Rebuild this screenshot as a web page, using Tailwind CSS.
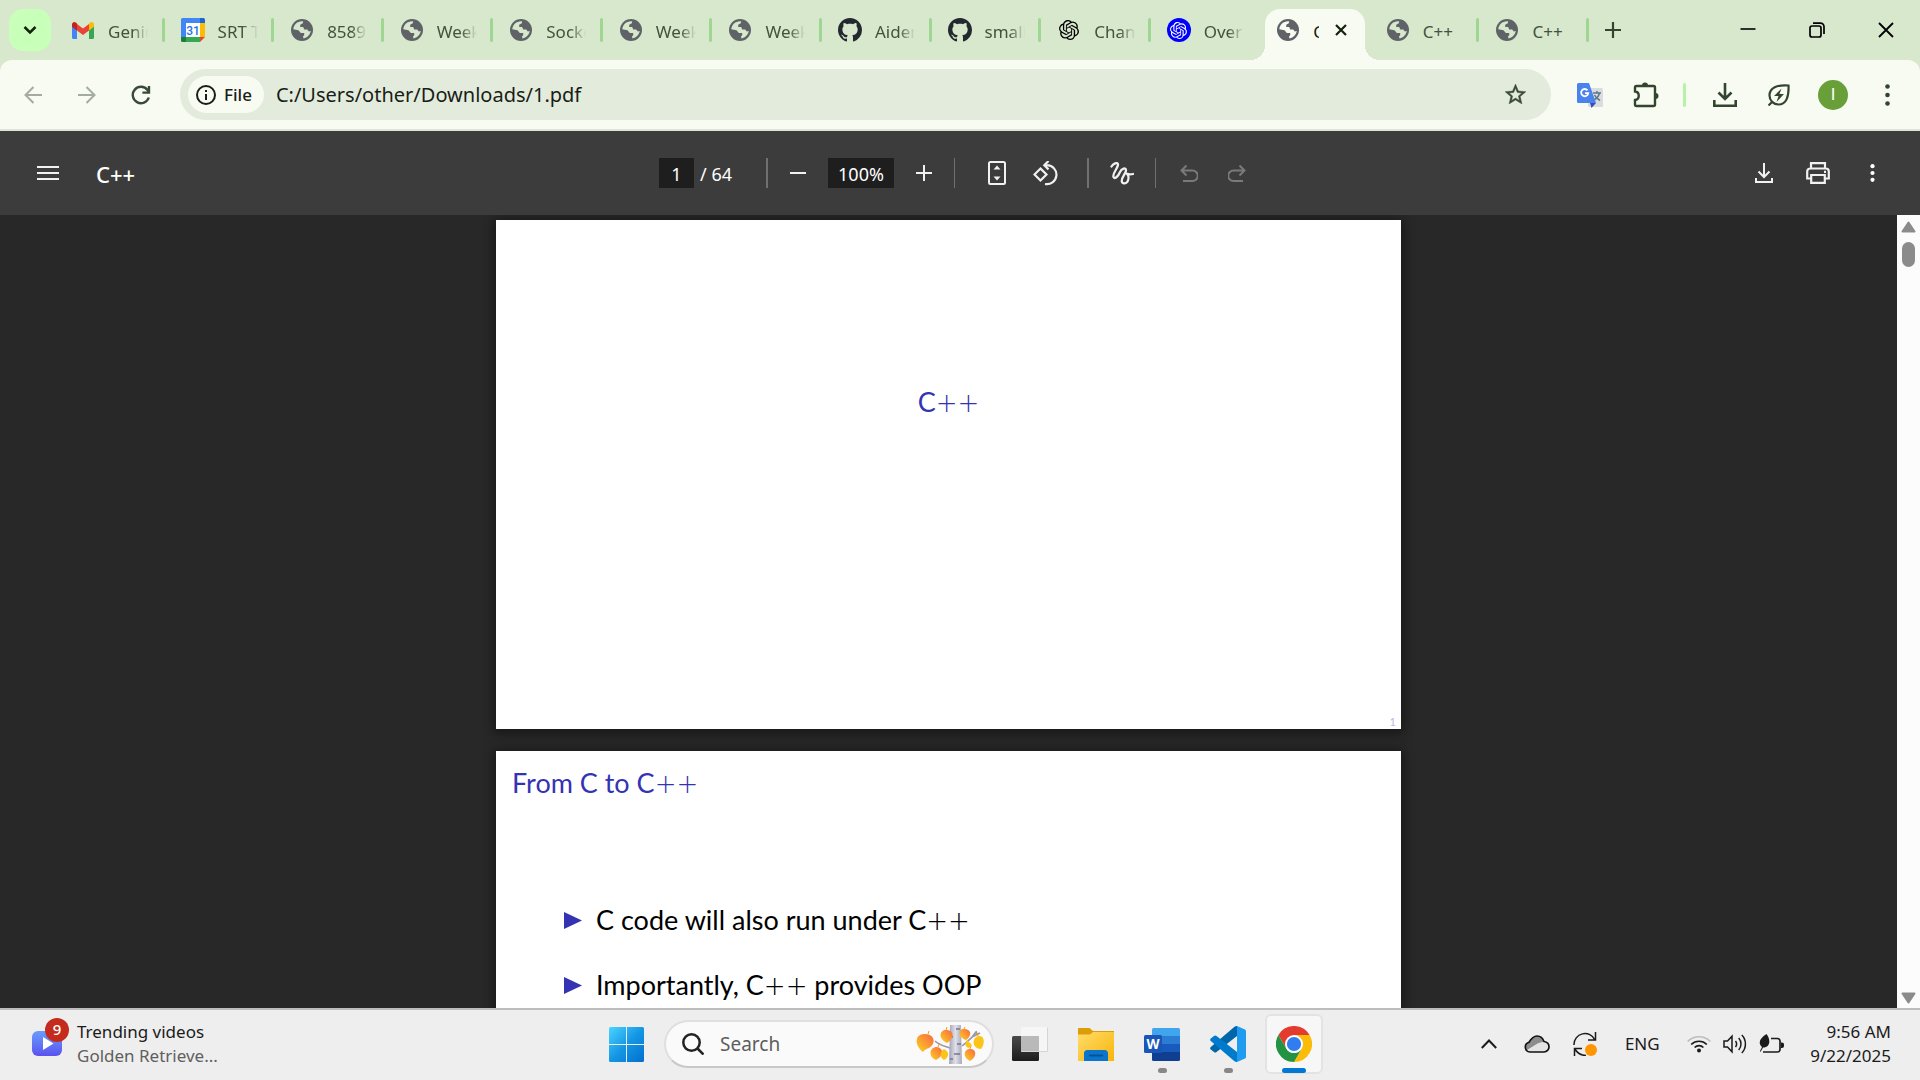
<!DOCTYPE html>
<html lang="en">
<head>
<meta charset="utf-8">
<title>C++</title>
<script src="https://cdn.jsdelivr.net/npm/@tailwindcss/browser@4"></script>
</head>
<body class="flex h-screen flex-col overflow-hidden bg-[#282828] font-['Noto_Sans','Open_Sans',sans-serif]">

<svg class="hidden" aria-hidden="true">
  <symbol id="globe" viewBox="0 0 22 22">
    <circle cx="11" cy="11" r="11" fill="#5f6368"/>
    <path d="M2.300 10.200C2.600 5.800 6.400 2.200 11 2.200l1.200.2-.4 1.800-2.600 1.600v2.200h3l1 2.400h3l1.600 2 2-.3c-.6 3.600-3.500 6.800-7.300 7.500l-.5-2.100 1.200-1.300v-2.200H9.800L7.500 11.200z" fill="currentColor"/>
  </symbol>
  <symbol id="github" viewBox="0 0 16 16"><path fill="#24292f" d="M8 0C3.580 0 0 3.580 0 8c0 3.540 2.290 6.530 5.470 7.590.4.070.55-.17.55-.38 0-.19-.01-.82-.01-1.490-2.010.37-2.530-.49-2.690-.94-.09-.23-.48-.94-.82-1.130-.28-.15-.68-.52-.01-.53.63-.01 1.080.58 1.230.82.72 1.210 1.870.87 2.330.66.07-.52.28-.87.51-1.070-1.780-.2-3.640-.89-3.640-3.950 0-.87.31-1.590.82-2.150-.08-.2-.36-1.020.08-2.120 0 0 .67-.21 2.200.82.64-.18 1.320-.27 2-.27s1.360.09 2 .27c1.530-1.040 2.200-.82 2.200-.82.44 1.100.16 1.920.08 2.120.51.56.82 1.270.82 2.150 0 3.070-1.870 3.750-3.650 3.950.29.25.54.73.54 1.480 0 1.070-.01 1.930-.01 2.200 0 .21.15.46.55.38A8.010 8.010 0 0 0 16 8c0-4.420-3.580-8-8-8z"/></symbol>
  <symbol id="openai" viewBox="0 0 24 24"><path fill="currentColor" d="M22.2819 9.8211a5.9847 5.9847 0 0 0-.5157-4.9108 6.0462 6.0462 0 0 0-6.5098-2.9A6.0651 6.0651 0 0 0 4.9807 4.1818a5.9847 5.9847 0 0 0-3.9977 2.9 6.0462 6.0462 0 0 0 .7427 7.0966 5.98 5.98 0 0 0 .511 4.9107 6.051 6.051 0 0 0 6.5146 2.9001A5.9847 5.9847 0 0 0 13.2599 24a6.0557 6.0557 0 0 0 5.7718-4.2058 5.9894 5.9894 0 0 0 3.9977-2.9001 6.0557 6.0557 0 0 0-.7475-7.0729zm-9.022 12.6081a4.4755 4.4755 0 0 1-2.8764-1.0408l.1419-.0804 4.7783-2.7582a.7948.7948 0 0 0 .3927-.6813v-6.7369l2.02 1.1686a.071.071 0 0 1 .038.052v5.5826a4.504 4.504 0 0 1-4.4945 4.4944zm-9.6607-4.1254a4.4708 4.4708 0 0 1-.5346-3.0137l.142.0852 4.783 2.7582a.7712.7712 0 0 0 .7806 0l5.8428-3.3685v2.3324a.0804.0804 0 0 1-.0332.0615L9.74 19.9502a4.4992 4.4992 0 0 1-6.1408-1.6464zM2.3408 7.8956a4.485 4.485 0 0 1 2.3655-1.9728V11.6a.7664.7664 0 0 0 .3879.6765l5.8144 3.3543-2.0201 1.1685a.0757.0757 0 0 1-.071 0l-4.8303-2.7865A4.504 4.504 0 0 1 2.3408 7.872zm16.5963 3.8558L13.1038 8.364 15.1192 7.2a.0757.0757 0 0 1 .071 0l4.8303 2.7913a4.4944 4.4944 0 0 1-.6765 8.1042v-5.6772a.79.79 0 0 0-.407-.667zm2.0107-3.0231l-.142-.0852-4.7735-2.7818a.7759.7759 0 0 0-.7854 0L9.409 9.2297V6.8974a.0662.0662 0 0 1 .0284-.0615l4.8303-2.7866a4.4992 4.4992 0 0 1 6.6802 4.66zM8.3065 12.863l-2.02-1.1638a.0804.0804 0 0 1-.038-.0567V6.0742a4.4992 4.4992 0 0 1 7.3757-3.4537l-.142.0805L8.704 5.459a.7948.7948 0 0 0-.3927.6813zm1.0976-2.3654l2.602-1.4998 2.6069 1.4998v2.9994l-2.5974 1.4997-2.6067-1.4997Z"/></symbol>
</svg>

<!-- Tab strip -->
<header class="flex h-[60px] shrink-0 items-center bg-[#d7e8cd] pl-[9px] text-[#43523e]">
  <button aria-label="Search tabs" class="grid size-[42px] shrink-0 place-items-center rounded-[14px] bg-[#c8ffb9]">
    <svg class="size-4" viewBox="0 0 16 16" fill="none" stroke="#14210f" stroke-width="2.500"><path d="M2.500 5l5.500 5.500L13.500 5"/></svg>
  </button>
  <nav aria-label="Tabs" class="ml-1 grid h-full w-[1534px] min-w-0 grid-cols-14 text-[17px]">
    <a href="#" class="flex min-w-0 items-center pl-4">
      <span class="grid w-6 shrink-0 place-items-center"><svg class="h-[17px] w-[22px]" viewBox="0 0 22 17"><path fill="#4285f4" d="M0 2v13.500A1.500 1.500 0 0 0 1.500 17H5V7z"/><path fill="#34a853" d="M22 2v13.500a1.500 1.500 0 0 1-1.500 1.500H17V7z"/><path fill="#ea4335" d="M5 8.500V2l6 4.500L17 2v6.500L11 13z"/><path fill="#c5221f" d="M0 2.500C0 .3 2.500-.6 4 .7L5 1.500v7L0 4.700z"/><path fill="#fbbc04" d="M22 2.500C22 .3 19.500-.6 18 .7l-1 .8v7l5-3.800z"/></svg></span>
      <span class="ml-[13px] mt-1 w-10 overflow-hidden whitespace-nowrap [mask-image:linear-gradient(to_right,black_60%,transparent)]">Geniu</span>
      <span class="ml-auto h-6 w-[3px] rounded-full bg-[#9fd792]"></span>
    </a>
    <a href="#" class="flex min-w-0 items-center pl-4">
      <svg class="size-6 shrink-0" viewBox="0 0 24 24"><path fill="#4285f4" d="M0 1.500A1.500 1.500 0 0 1 1.500 0H19v5H5v14H0z"/><path fill="#1967d2" d="M19 0h3.500A1.500 1.500 0 0 1 24 1.500V5h-5z"/><path fill="#fbbc04" d="M19 5h5v14h-5z"/><path fill="#34a853" d="M5 19h14v5H5z"/><path fill="#188038" d="M0 19h5v5H1.500A1.500 1.500 0 0 1 0 22.500z"/><path fill="#ea4335" d="M19 19h5l-5 5z"/><path fill="#fff" d="M5 5h14v14H5z"/><text x="12" y="16.500" text-anchor="middle" font-size="12" font-family="Roboto, sans-serif" font-weight="500" fill="#1a73e8">31</text></svg>
      <span class="ml-[13px] mt-1 w-10 overflow-hidden whitespace-nowrap [mask-image:linear-gradient(to_right,black_60%,transparent)]">SRT T</span>
      <span class="ml-auto h-6 w-[3px] rounded-full bg-[#9fd792]"></span>
    </a>
    <a href="#" class="flex min-w-0 items-center pl-4">
      <span class="grid w-6 shrink-0 place-items-center"><svg class="size-[22px] text-[#d7e8cd]"><use href="#globe"/></svg></span>
      <span class="ml-[13px] mt-1 w-10 overflow-hidden whitespace-nowrap [mask-image:linear-gradient(to_right,black_60%,transparent)]">8589</span>
      <span class="ml-auto h-6 w-[3px] rounded-full bg-[#9fd792]"></span>
    </a>
    <a href="#" class="flex min-w-0 items-center pl-4">
      <span class="grid w-6 shrink-0 place-items-center"><svg class="size-[22px] text-[#d7e8cd]"><use href="#globe"/></svg></span>
      <span class="ml-[13px] mt-1 w-10 overflow-hidden whitespace-nowrap [mask-image:linear-gradient(to_right,black_60%,transparent)]">Week</span>
      <span class="ml-auto h-6 w-[3px] rounded-full bg-[#9fd792]"></span>
    </a>
    <a href="#" class="flex min-w-0 items-center pl-4">
      <span class="grid w-6 shrink-0 place-items-center"><svg class="size-[22px] text-[#d7e8cd]"><use href="#globe"/></svg></span>
      <span class="ml-[13px] mt-1 w-10 overflow-hidden whitespace-nowrap [mask-image:linear-gradient(to_right,black_60%,transparent)]">Socke</span>
      <span class="ml-auto h-6 w-[3px] rounded-full bg-[#9fd792]"></span>
    </a>
    <a href="#" class="flex min-w-0 items-center pl-4">
      <span class="grid w-6 shrink-0 place-items-center"><svg class="size-[22px] text-[#d7e8cd]"><use href="#globe"/></svg></span>
      <span class="ml-[13px] mt-1 w-10 overflow-hidden whitespace-nowrap [mask-image:linear-gradient(to_right,black_60%,transparent)]">Week</span>
      <span class="ml-auto h-6 w-[3px] rounded-full bg-[#9fd792]"></span>
    </a>
    <a href="#" class="flex min-w-0 items-center pl-4">
      <span class="grid w-6 shrink-0 place-items-center"><svg class="size-[22px] text-[#d7e8cd]"><use href="#globe"/></svg></span>
      <span class="ml-[13px] mt-1 w-10 overflow-hidden whitespace-nowrap [mask-image:linear-gradient(to_right,black_60%,transparent)]">Week</span>
      <span class="ml-auto h-6 w-[3px] rounded-full bg-[#9fd792]"></span>
    </a>
    <a href="#" class="flex min-w-0 items-center pl-4">
      <svg class="size-6 shrink-0"><use href="#github"/></svg>
      <span class="ml-[13px] mt-1 w-10 overflow-hidden whitespace-nowrap [mask-image:linear-gradient(to_right,black_60%,transparent)]">Aider</span>
      <span class="ml-auto h-6 w-[3px] rounded-full bg-[#9fd792]"></span>
    </a>
    <a href="#" class="flex min-w-0 items-center pl-4">
      <svg class="size-6 shrink-0"><use href="#github"/></svg>
      <span class="ml-[13px] mt-1 w-10 overflow-hidden whitespace-nowrap [mask-image:linear-gradient(to_right,black_60%,transparent)]">small</span>
      <span class="ml-auto h-6 w-[3px] rounded-full bg-[#9fd792]"></span>
    </a>
    <a href="#" class="flex min-w-0 items-center pl-4">
      <span class="grid w-6 shrink-0 place-items-center text-black"><svg class="size-5"><use href="#openai"/></svg></span>
      <span class="ml-[13px] mt-1 w-[42px] overflow-hidden whitespace-nowrap [mask-image:linear-gradient(to_right,black_60%,transparent)]">Chan</span>
      <span class="ml-auto h-6 w-[3px] rounded-full bg-[#9fd792]"></span>
    </a>
    <a href="#" class="flex min-w-0 items-center pl-4">
      <span class="grid size-6 shrink-0 place-items-center rounded-full bg-[#0000ff] text-white"><svg class="size-[17px]"><use href="#openai"/></svg></span>
      <span class="ml-[13px] mt-1 w-10 overflow-hidden whitespace-nowrap [mask-image:linear-gradient(to_right,black_60%,transparent)]">Over</span>
    </a>
    <div class="flex min-w-0 items-end px-[5px]">
      <div class="relative flex h-[51px] w-full items-center rounded-t-[15px] bg-[#f8fbf2] pl-[11px] pb-[9px] text-[#14210f]">
        <span class="absolute bottom-0 -left-[15px] size-[15px] bg-[radial-gradient(circle_at_0_0,transparent_15px,#f8fbf2_15px)]"></span>
        <span class="absolute bottom-0 -right-[15px] size-[15px] bg-[radial-gradient(circle_at_100%_0,transparent_15px,#f8fbf2_15px)]"></span>
        <a href="#" class="flex items-center">
          <span class="grid w-6 shrink-0 place-items-center"><svg class="size-[22px] text-[#f8fbf2]"><use href="#globe"/></svg></span>
          <span class="ml-[13px] mt-1 w-[6px] overflow-hidden whitespace-nowrap">C++</span>
        </a>
        <button aria-label="Close tab" class="ml-auto mr-3 grid size-6 shrink-0 place-items-center"><svg class="size-3" viewBox="0 0 12 12" stroke="#14210f" stroke-width="2.200"><path d="M1 1l10 10M11 1L1 11"/></svg></button>
      </div>
    </div>
    <a href="#" class="flex min-w-0 items-center pl-4">
      <span class="grid w-6 shrink-0 place-items-center"><svg class="size-[22px] text-[#d7e8cd]"><use href="#globe"/></svg></span>
      <span class="ml-[13px] mt-1 w-10">C++</span>
      <span class="ml-auto h-6 w-[3px] rounded-full bg-[#9fd792]"></span>
    </a>
    <a href="#" class="flex min-w-0 items-center pl-4">
      <span class="grid w-6 shrink-0 place-items-center"><svg class="size-[22px] text-[#d7e8cd]"><use href="#globe"/></svg></span>
      <span class="ml-[13px] mt-1 w-10">C++</span>
      <span class="ml-auto h-6 w-[3px] rounded-full bg-[#9fd792]"></span>
    </a>
  </nav>
  <button aria-label="New tab" class="grid h-[42px] w-12 shrink-0 place-items-center"><svg class="size-4" viewBox="0 0 16 16" stroke="#33452f" stroke-width="2.200"><path d="M8 0v16M0 8h16"/></svg></button>
  <div class="ml-auto flex h-full shrink-0">
    <button aria-label="Minimize" class="grid w-[69px] place-items-center"><svg class="h-4 w-4" viewBox="0 0 16 16" stroke="#000" stroke-width="1.600"><path d="M.5 7h15"/></svg></button>
    <button aria-label="Restore" class="grid w-[69px] place-items-center"><svg class="size-4" viewBox="0 0 16 16" fill="none" stroke="#000" stroke-width="1.700"><rect x="1" y="4" width="11" height="11" rx="2"/><path d="M4 1.200h7.500a3.500 3.500 0 0 1 3.500 3.500V12"/></svg></button>
    <button aria-label="Close" class="grid w-[69px] place-items-center"><svg class="size-4" viewBox="0 0 16 16" stroke="#000" stroke-width="1.800"><path d="M1 1l14 14M15 1L1 15"/></svg></button>
  </div>
</header>

<!-- Address bar -->
<div class="shrink-0 bg-[#d7e8cd]">
  <div class="flex h-[71px] items-center rounded-t-[12px] border-b-2 border-[#dfe4d8] bg-[#f8fbf2] pl-[6px] pr-[6px]">
    <button aria-label="Back" class="grid w-[54px] place-items-center"><svg class="size-[18px]" viewBox="0 0 18 18" fill="none" stroke="#a4aba0" stroke-width="2"><path d="M18 9H2M9.500 1L1.500 9l8 8"/></svg></button>
    <button aria-label="Forward" class="grid w-[54px] place-items-center"><svg class="size-[18px]" viewBox="0 0 18 18" fill="none" stroke="#a4aba0" stroke-width="2"><path d="M0 9h16M8.500 1l8 8-8 8"/></svg></button>
    <button aria-label="Reload" class="grid w-[54px] place-items-center"><svg class="size-5" viewBox="0 0 20 20" fill="none" stroke="#3b4a37" stroke-width="2.400"><path d="M17.800 12.500A8.200 8.200 0 1 1 16.500 5L18 7M18 1v6.600h-6.600"/></svg></button>
    <div class="ml-3 flex h-[51px] flex-1 items-center rounded-full bg-[#e3ecdc] pl-2 pr-[23px] text-[#191d17]">
      <button class="flex h-[37px] items-center gap-2 rounded-full bg-[#f8fbf2] pl-2 pr-3 text-[17px] font-medium">
        <svg class="size-5" viewBox="0 0 20 20" fill="none" stroke="#191d17" stroke-width="2"><circle cx="10" cy="10" r="9"/><path d="M10 9v6M10 5v2"/></svg>File
      </button>
      <input aria-label="Address" value="C:/Users/other/Downloads/1.pdf" class="ml-3 min-w-0 flex-1 bg-transparent text-[20px] outline-none">
      <button aria-label="Bookmark"><svg class="size-[25px]" viewBox="0 0 24 24" fill="#3b4a37" stroke="#3b4a37" stroke-width=".4"><path d="M22 9.240l-7.190-.62L12 2 9.190 8.630 2 9.240l5.460 4.730L5.820 21 12 17.270 18.180 21l-1.630-7.030L22 9.240zM12 15.400l-3.760 2.270 1-4.280-3.320-2.880 4.380-.38L12 6.100l1.710 4.040 4.380.38-3.320 2.880 1 4.280L12 15.400z"/></svg></button>
    </div>
    <button aria-label="Translate" class="ml-[11px] grid w-14 place-items-center"><svg class="size-[26px]" viewBox="0 0 26 26"><rect x="11" y="6" width="15" height="19" rx="1.500" fill="#dadce0"/><path d="M16 11h8M20 9v2M22.500 11c-1 4-3.500 6-6 7.500M17.500 13c1 2.500 3 4 5.500 5.500" fill="none" stroke="#5b7a86" stroke-width="1.500"/><path fill="#4a83ee" d="M1.500 1H12l7 20H1.500A1.500 1.500 0 0 1 0 19.500v-17A1.500 1.500 0 0 1 1.500 1z"/><path fill="#3a4db5" d="M13 21h6l-4.500 5z"/><path d="M10.500 8.300a3.600 3.600 0 1 0 .8 2.900H8" fill="none" stroke="#fff" stroke-width="1.800"/></svg></button>
    <button aria-label="Extensions" class="grid w-14 place-items-center"><svg class="size-[26px]" viewBox="0 0 26 26"><path d="M3.500 4h17A1.500 1.500 0 0 1 22 5.500v17a1.500 1.500 0 0 1-1.500 1.500h-17A1.500 1.500 0 0 1 2 22.500V18c5-.5 5-8 0-8.500v-4A1.500 1.500 0 0 1 3.500 4z" fill="none" stroke="#33452f" stroke-width="2.400"/><path d="M9 3.500a3 3 0 0 1 6 0zM22.500 11a3 3 0 0 1 0 6z" fill="#33452f"/></svg></button>
    <span class="ml-[9px] mr-3 h-6 w-[3px] rounded-full bg-[#b7f2a8]"></span>
    <button aria-label="Downloads" class="grid w-[54px] place-items-center"><svg class="size-6" viewBox="0 0 24 24" fill="none" stroke="#33452f" stroke-width="2.600"><path d="M12 0v15M5.500 9.500L12 16l6.500-6.500M1.300 17v5.700h21.400V17"/></svg></button>
    <button aria-label="Energy saver" class="grid w-[54px] place-items-center"><svg class="size-[22px]" viewBox="0 0 22 22" fill="none" stroke="#33452f" stroke-width="2.200"><path d="M20.500 1.500C9 .5 1.500 4 1.500 11.500c0 5 4 9 9 9 8 0 10.500-8 10-19zM5 17l-4.500 4.500"/><path d="M13.500 4.500L6 12h4.500l-2 6L16 10h-4.500z" fill="#33452f" stroke="none"/></svg></button>
    <button aria-label="Profile" class="grid w-[54px] place-items-center"><span class="grid size-[30px] place-items-center rounded-full bg-[#689f38] font-['Roboto',sans-serif] text-[17px] text-white">I</span></button>
    <button aria-label="Menu" class="grid w-[54px] place-items-center"><svg class="h-[22px] w-[5px]" viewBox="0 0 5 22" fill="#33452f"><circle cx="2.500" cy="2.500" r="2.300"/><circle cx="2.500" cy="11" r="2.300"/><circle cx="2.500" cy="19.500" r="2.300"/></svg></button>
  </div>
</div>

<!-- PDF toolbar -->
<div class="flex h-[84px] shrink-0 items-center bg-[#3c3c3c] text-[#f1f1f1]">
  <div class="flex flex-1 items-center pl-[21px]">
    <button aria-label="Toggle sidebar" class="grid w-[54px] place-items-center"><svg class="h-[14px] w-[22px]" viewBox="0 0 22 14" stroke="#f1f1f1" stroke-width="2"><path d="M0 1h22M0 7h22M0 13h22"/></svg></button>
    <h1 class="ml-[21px] pt-[2px] text-[22px] leading-[30px] font-medium text-white">C++</h1>
  </div>
  <div class="flex items-center text-[18px] text-white">
    <input aria-label="Page number" value="1" class="h-[30px] w-[35px] bg-[#1e1e1e] pt-[2px] text-center outline-none">
    <span class="w-[72px] whitespace-nowrap pl-[6px] pt-[2px]">/ 64</span>
    <span class="h-[30px] w-[2px] bg-[#707070]"></span>
    <button aria-label="Zoom out" class="grid w-[60px] place-items-center"><svg class="size-4" viewBox="0 0 16 16" stroke="#f1f1f1" stroke-width="2"><path d="M0 8h16"/></svg></button>
    <input aria-label="Zoom level" value="100%" class="h-[30px] w-[66px] bg-[#1e1e1e] pt-[2px] text-center outline-none">
    <button aria-label="Zoom in" class="grid w-[60px] place-items-center"><svg class="size-4" viewBox="0 0 16 16" stroke="#f1f1f1" stroke-width="2"><path d="M0 8h16M8 0v16"/></svg></button>
    <span class="mr-[18px] h-[30px] w-px bg-[#707070]"></span>
    <button aria-label="Fit to page" class="grid w-12 place-items-center"><svg class="h-6 w-[18px]" viewBox="0 0 18 24"><rect x="1" y="1" width="16" height="22" rx="1.500" fill="none" stroke="#f1f1f1" stroke-width="2"/><path fill="#f1f1f1" d="M9 4.500l3.500 4h-7zM9 19.500l3.500-4h-7z"/></svg></button>
    <button aria-label="Rotate counterclockwise" class="grid w-12 place-items-center"><svg class="size-[25px]" viewBox="0 0 25 25" fill="none" stroke="#f1f1f1" stroke-width="2.200"><path d="M7.500 7.500l6 6-6 6-6-6zM11 4.200h3a9.500 9.500 0 1 1-2 18.800M15.500 0l-4.200 4.200 4.200 4.200"/></svg></button>
    <span class="ml-[18px] h-[30px] w-[2px] bg-[#707070]"></span>
    <button aria-label="Draw" class="grid w-[66px] place-items-center"><svg class="size-6" viewBox="0 0 24 24" fill="none" stroke="#f1f1f1" stroke-width="2.300" stroke-linecap="round"><path d="M1.500 5.500C3 3 7.500.500 8 3.500 8.400 6.500 2 12.500 3.500 16c1.600 3 5-1.500 6.500-5 1.500-3.800 6-5 6-1.500 0 2.500-5 7.500-4.200 11 .7 2.800 5 2.500 6.200-1 1-3 .2-6-1.500-7M16.500 12.500c2 1 4 1.200 6.500.5"/></svg></button>
    <span class="mr-[9px] h-[30px] w-px bg-[#707070]"></span>
    <button aria-label="Undo" disabled class="grid w-12 place-items-center"><svg class="size-[18px]" viewBox="0 0 18 18" fill="none" stroke="#7a7a7a" stroke-width="2"><path d="M3 17h9.500a4.800 4.800 0 0 0 0-10.500H2M6.500 1.500l-5 5 5 5"/></svg></button>
    <button aria-label="Redo" disabled class="grid w-12 place-items-center"><svg class="size-[18px]" viewBox="0 0 18 18" fill="none" stroke="#7a7a7a" stroke-width="2"><path d="M15 17H5.500a4.800 4.800 0 0 1 0-10.500H16M11.500 1.500l5 5-5 5"/></svg></button>
  </div>
  <div class="flex flex-1 items-center justify-end pr-[21px]">
    <button aria-label="Download" class="grid w-[54px] place-items-center"><svg class="h-5 w-[18px]" viewBox="0 0 18 20" fill="none" stroke="#f1f1f1" stroke-width="2"><path d="M9 0v13.500M3.500 8.500L9 14l5.500-5.500M1 15v4h16v-4"/></svg></button>
    <button aria-label="Print" class="grid w-[54px] place-items-center"><svg class="h-[22px] w-6" viewBox="0 0 24 22" fill="none" stroke="#f1f1f1" stroke-width="2.200"><path d="M5 6V1.200h14V6M5 16.500H1.200V9.500a3 3 0 0 1 3-3h15.600a3 3 0 0 1 3 3v7H19"/><path d="M5.200 13h13.600v7.800H5.200z"/><path d="M18 9.800h2"/></svg></button>
    <button aria-label="More" class="grid w-[54px] place-items-center"><svg class="h-[18px] w-[5px]" viewBox="0 0 5 18" fill="#fff"><circle cx="2.500" cy="2.200" r="2.100"/><circle cx="2.500" cy="9" r="2.100"/><circle cx="2.500" cy="15.800" r="2.100"/></svg></button>
  </div>
</div>

<!-- Document -->
<main class="flex min-h-0 flex-1">
  <div class="flex min-w-0 flex-1 flex-col items-center gap-[22px] overflow-hidden bg-[#282828] pt-[5px] font-['Lato',sans-serif]">
    <section class="flex h-[509px] w-[905px] shrink-0 flex-col bg-white shadow-[0_2px_10px_3px_rgba(0,0,0,0.4)]">
      <h2 class="pt-[162px] text-center text-[27px] leading-[40px] text-[#3333b3]">C<span class="font-['DejaVu_Sans_Light','DejaVu_Sans',sans-serif] text-[26px] leading-none font-extralight">++</span></h2>
      <p class="mt-auto pr-[5px] text-right text-[11px] leading-[14px] text-[#b9b9e6]">1</p>
    </section>
    <section class="h-[509px] w-[905px] shrink-0 bg-white shadow-[0_2px_10px_3px_rgba(0,0,0,0.4)]">
      <h2 class="pl-4 pt-3 text-[27px] leading-[40px] text-[#3333b3]">From C to C<span class="font-['DejaVu_Sans_Light','DejaVu_Sans',sans-serif] text-[26px] leading-none font-extralight">++</span></h2>
      <ul class="flex flex-col gap-[25px] pl-[68px] pt-[97px] text-[27px] leading-[40px] text-black">
        <li class="flex items-center gap-[14px]"><svg class="h-[17px] w-[18px]" viewBox="0 0 18 17"><path fill="#3333b3" d="M0 0l18 8.500L0 17z"/></svg><span>C code will also run under C<span class="font-['DejaVu_Sans_Light','DejaVu_Sans',sans-serif] text-[26px] leading-none font-extralight">++</span></span></li>
        <li class="flex items-center gap-[14px]"><svg class="h-[17px] w-[18px]" viewBox="0 0 18 17"><path fill="#3333b3" d="M0 0l18 8.500L0 17z"/></svg><span>Importantly, C<span class="font-['DejaVu_Sans_Light','DejaVu_Sans',sans-serif] text-[26px] leading-none font-extralight">++</span> provides OOP</span></li>
      </ul>
    </section>
  </div>
  <div class="flex w-[23px] shrink-0 flex-col items-center bg-[#fcfcfc] pt-[6px] pb-1">
    <svg class="h-3 w-[15px]" viewBox="0 0 15 12"><path fill="#8b8b8b" stroke="#8b8b8b" stroke-width="2" stroke-linejoin="round" d="M7.500 1.500L13.500 10.500h-12z"/></svg>
    <span class="mt-[9px] h-[25px] w-[13px] rounded-full bg-[#8b8b8b]"></span>
    <svg class="mt-auto h-3 w-[15px]" viewBox="0 0 15 12"><path fill="#8b8b8b" stroke="#8b8b8b" stroke-width="2" stroke-linejoin="round" d="M7.500 10.500L13.500 1.500h-12z"/></svg>
  </div>
</main>

<!-- Taskbar -->
<footer class="flex h-[72px] shrink-0 items-center border-t-2 border-[#bdbdbd] bg-[#eeeeee] pb-[2px] text-[#1b1b1b]">
  <div class="flex flex-1 items-center pl-8">
    <span class="relative mt-[-2px] block h-[25px] w-[30px] rounded-[6px] bg-linear-to-b from-[#6a9cfb] to-[#5b50f0]">
      <svg class="absolute left-[10px] top-[6px] h-[13px] w-3" viewBox="0 0 12 13"><path fill="#fff" d="M1 0l10.500 6.500L1 13z"/></svg>
      <span class="absolute -top-[13px] left-[13px] grid size-6 place-items-center rounded-full bg-[#c42b1c] text-[15px] font-medium text-white">9</span>
    </span>
    <a href="#" class="ml-[15px] text-[17px] leading-6"><span class="block">Trending videos</span><span class="block text-[#5f5f5f]">Golden Retrieve...</span></a>
  </div>
  <div class="flex h-full items-center pr-[3px]">
    <button aria-label="Start" class="grid w-[58px] place-items-center"><svg class="size-[35px]" viewBox="0 0 35 35"><defs><linearGradient id="win" gradientUnits="userSpaceOnUse" x1="0" y1="0" x2="35" y2="35"><stop offset="0" stop-color="#4cd4ff"/><stop offset=".5" stop-color="#1597e4"/><stop offset="1" stop-color="#006fce"/></linearGradient></defs><path fill="url(#win)" d="M1.500 0H17v17H0V1.500A1.500 1.500 0 0 1 1.500 0zM18 0h15.500A1.500 1.500 0 0 1 35 1.500V17H18zM0 18h17v17H1.500A1.500 1.500 0 0 1 0 33.500zM18 18h17v15.500a1.500 1.500 0 0 1-1.500 1.500H18z"/></svg></button>
    <label class="ml-[9px] flex h-12 w-[330px] items-center rounded-full border-2 border-[#dfdfdf] border-b-[#c8c8c8] bg-[#fafafa] pl-4 pr-[6px]">
      <svg class="size-[22px] shrink-0" viewBox="0 0 22 22" fill="none" stroke="#222" stroke-width="2.500"><circle cx="9.500" cy="9.500" r="8.200"/><path d="M15.500 15.500l6 6"/></svg>
      <input aria-label="Search" placeholder="Search" class="ml-4 min-w-0 flex-1 bg-transparent text-[19px] outline-none placeholder:text-[#5d5d5d]">
      <svg class="h-[39px] w-[70px] shrink-0" viewBox="0 0 70 39"><defs><linearGradient id="lf" x1="1" y1="0" x2="0" y2="1"><stop offset="0" stop-color="#f8693c"/><stop offset=".5" stop-color="#fb9b33"/><stop offset="1" stop-color="#fcd41a"/></linearGradient><linearGradient id="tk" x1="0" x2="1"><stop offset="0" stop-color="#a3a2b5"/><stop offset=".5" stop-color="#e0e0ea"/><stop offset="1" stop-color="#a8a8b8"/></linearGradient></defs>
        <path d="M36 24c-6-3-12-3-17-8M46 21c6-5 9-6 14-14M56 12l8-4M60 6l1 4" fill="none" stroke="#9896a8" stroke-width="1.600"/>
        <path fill="url(#tk)" d="M34 0h11l1 39H33z"/><path d="M40 4h4M34 12h3M41 19h4M38 29h6M34 34h3" stroke="#77758a" stroke-width="1.500"/>
        <g fill="url(#lf)"><path d="M7 27C-4 18 1 8 9 9c9 0 12 9 4 14-3 1-5 2-6 4z"/><path d="M31 18c-10-5-7-13-1-13 8 0 9 8 1 13z"/><path d="M50 15c-9-3-8-11-2-11 8 0 8 7 2 11z"/><path d="M20 35c-8-3-7-13 1-13 7 1 7 9-1 13z"/><path d="M54 36c-8-4-6-12 0-12 7 0 7 8 0 12z"/></g>
        <g fill="#fcc419"><path d="M65 24c-9 0-10-12-2-13 6 0 6 8 2 13z"/><path d="M28 35c-4-2-5-8 0-11 5 2 6 8 0 11z"/><path d="M53 23c-5-1-4-6-2-8l5 5z"/></g>
        <path d="M12 9l1-3M30 5l1-3M48 4l1-2M22 22l1-3M54 24l1-3M62 11l-1-3" stroke="#f59f00"/></svg>
    </label>
    <button aria-label="Task view" class="ml-[3px] grid w-[66px] place-items-center"><svg class="h-[34px] w-9" viewBox="0 0 36 34"><defs><linearGradient id="tv" x1="0" y1="0" x2="0" y2="1"><stop offset="0" stop-color="#4a4a4a"/><stop offset="1" stop-color="#1c1c1c"/></linearGradient></defs><rect y="9" width="27" height="25" rx="1.500" fill="url(#tv)"/><rect x="9" width="27" height="25" rx="1.500" fill="#f6f6f6"/><path d="M9 9h18v15.500H9z" fill="#b9b9b9"/><path d="M9.500 24.500h26V.5" fill="none" stroke="#d5d5d5"/></svg></button>
    <button aria-label="File Explorer" class="grid w-[66px] place-items-center"><svg class="h-[33px] w-9" viewBox="0 0 36 33"><defs><linearGradient id="fo" x1="0" y1="0" x2="1" y2="1"><stop offset="0" stop-color="#ffdc6b"/><stop offset="1" stop-color="#f9b50a"/></linearGradient></defs><path fill="#dc9d06" d="M1 0h10.500L15 3h21v5H0V1a1 1 0 0 1 1-1z"/><path fill="url(#fo)" d="M0 6.500h12L15 4h20a1 1 0 0 1 1 1v28H0z"/><path fill="#0b74cc" d="M6 33v-7.500A3.500 3.500 0 0 1 9.500 22h17a3.500 3.500 0 0 1 3.500 3.500V33z"/><path d="M11 27.500h14" stroke="#07508f" stroke-width="1.800"/></svg></button>
    <button aria-label="Word" class="relative grid h-full w-[66px] place-items-center"><svg class="h-[33px] w-9" viewBox="0 0 36 33"><path fill="#41a5ee" d="M8 1.500A1.500 1.500 0 0 1 9.500 0h25A1.500 1.500 0 0 1 36 1.500V8H8z"/><path fill="#2b7cd3" d="M8 8h28v8H8z"/><path fill="#185abd" d="M8 16h28v8H8z"/><path fill="#103f91" d="M8 24h28v7.500a1.500 1.500 0 0 1-1.500 1.500h-25A1.500 1.500 0 0 1 8 31.500z"/><rect y="7" width="18" height="18" rx="1.500" fill="#1a56b8"/><text x="9" y="21" text-anchor="middle" font-family="Open Sans, sans-serif" font-weight="700" font-size="13.500" fill="#fff">W</text></svg><span class="absolute bottom-[5px] left-[29px] h-[5px] w-[9px] rounded-full bg-[#878787]"></span></button>
    <button aria-label="Visual Studio Code" class="relative grid h-full w-[66px] place-items-center"><svg class="size-9" viewBox="0 0 36 36"><path fill="#0065a9" d="M27 0v10L6.500 26a2 2 0 0 1-2.500 0L.8 23.500a1.700 1.700 0 0 1 0-2.500L24.500.8A4 4 0 0 1 27 0z"/><path fill="#007acc" d="M27 36V26L6.500 10A2 2 0 0 0 4 10L.8 12.500a1.700 1.700 0 0 0 0 2.500l23.700 20.200A4 4 0 0 0 27 36z"/><path fill="#1f9cf0" d="M27 0l8 3.500a2 2 0 0 1 1 1.800v25.400a2 2 0 0 1-1 1.800L27 36z"/></svg><span class="absolute bottom-[5px] left-[29px] h-[5px] w-[9px] rounded-full bg-[#878787]"></span></button>
    <button aria-label="Google Chrome" class="relative ml-1 grid h-[60px] w-[58px] place-items-center rounded-[6px] border-2 border-[#e3e3e3] bg-[#f7f7f7]"><svg class="size-9" viewBox="0 0 36 36"><path fill="#e33b2e" d="M2.400 9A18 18 0 0 1 33.600 9H18l-7.800 13.500z"/><path fill="#fbbc09" d="M33.600 9A18 18 0 0 1 18 36l7.800-13.500L18 9z"/><path fill="#229342" d="M2.400 9l7.800 13.500A9 9 0 0 0 25.800 22.500L18 36A18 18 0 0 1 2.400 9z"/><circle cx="18" cy="18" r="9" fill="#fff"/><circle cx="18" cy="18" r="7.100" fill="#2f7def"/></svg><span class="absolute -bottom-px left-[15px] h-[5px] w-6 rounded-full bg-[#0078d4]"></span></button>
  </div>
  <div class="flex flex-1 items-center justify-end pr-[29px]">
    <button aria-label="Hidden icons" class="grid w-12 place-items-center"><svg class="h-[10px] w-4" viewBox="0 0 16 10" fill="none" stroke="#1b1b1b" stroke-width="2"><path d="M.8 9L8 1.500 15.200 9"/></svg></button>
    <button aria-label="OneDrive" class="grid w-12 place-items-center"><svg class="h-[18px] w-[26px]" viewBox="0 0 26 18"><path fill="#e4e4e4" d="M6 17a5 5 0 0 1-1-9.800C7 4 9.500 1 13 1c4 0 6 2.500 7 5.500 3 .5 5 2.500 5 5.200A5.200 5.200 0 0 1 20 17z"/><path fill="#8d8d8d" d="M1.500 12c0-3 1.500-4.500 4-5C7 3 10 1 13 1c4 0 6 2.500 7 5.500l-6 1.800L3 15z"/><path fill="none" stroke="#111" stroke-width="1.700" d="M6 17a5 5 0 0 1-1-9.800C7 4 9.500 1 13 1c4 0 6 2.500 7 5.500 3 .5 5 2.500 5 5.200A5.200 5.200 0 0 1 20 17z"/></svg></button>
    <button aria-label="Updates" class="grid w-12 place-items-center"><svg class="size-6" viewBox="0 0 24 24"><path d="M1 13A11 11 0 0 1 22 8M22.500 0v8H15M13 23.500c-5 0-8.500-2-11.500-7M1.500 24v-7.500H9" fill="none" stroke="#1b1b1b" stroke-width="1.500"/><circle cx="18" cy="18" r="6" fill="#ff9500"/></svg></button>
    <button class="w-[66px] text-center text-[17px]">ENG</button>
    <button aria-label="Network, sound, battery" class="ml-[6px] flex">
      <span class="grid w-9 place-items-center"><svg class="h-[18px] w-6" viewBox="0 0 24 18" fill="none" stroke-width="1.700"><path stroke="#bdbdbd" d="M.6 6.500a16 16 0 0 1 22.800 0"/><path stroke="#1b1b1b" d="M4.200 9.500a11 11 0 0 1 15.600 0M7.600 12.500a6.300 6.300 0 0 1 8.800 0"/><circle cx="12" cy="15.500" r="2" fill="#1b1b1b"/></svg></span>
      <span class="grid w-9 place-items-center"><svg class="h-5 w-6" viewBox="0 0 24 20" fill="none" stroke="#1b1b1b" stroke-width="1.500"><path d="M1 7h3.500L9 2.200v15.600L4.500 13H1zM12.500 7a5 5 0 0 1 0 6M15.700 4a9 9 0 0 1 0 12M18.800 1a13 13 0 0 1 0 18"/></svg></span>
      <span class="grid w-9 place-items-center"><svg class="h-5 w-[25px]" viewBox="0 0 25 20"><path d="M12 4.500h6.500A2.500 2.500 0 0 1 21 7v8.500a2.500 2.500 0 0 1-2.500 2.500H4" fill="none" stroke="#1b1b1b" stroke-width="1.700"/><path fill="#1b1b1b" d="M22 8.500h1a2 2 0 0 1 2 2v1.500a2 2 0 0 1-2 2h-1zM7.500 0c4 5 4.500 13-3.500 13.500L1.500 18 1 17l2-4C-1.500 9 1 4 7.500 0z"/></svg></span>
    </button>
    <button class="ml-[21px] text-right text-[17px] leading-6"><time class="block">9:56 AM</time><time class="block">9/22/2025</time></button>
  </div>
</footer>
</body>
</html>
